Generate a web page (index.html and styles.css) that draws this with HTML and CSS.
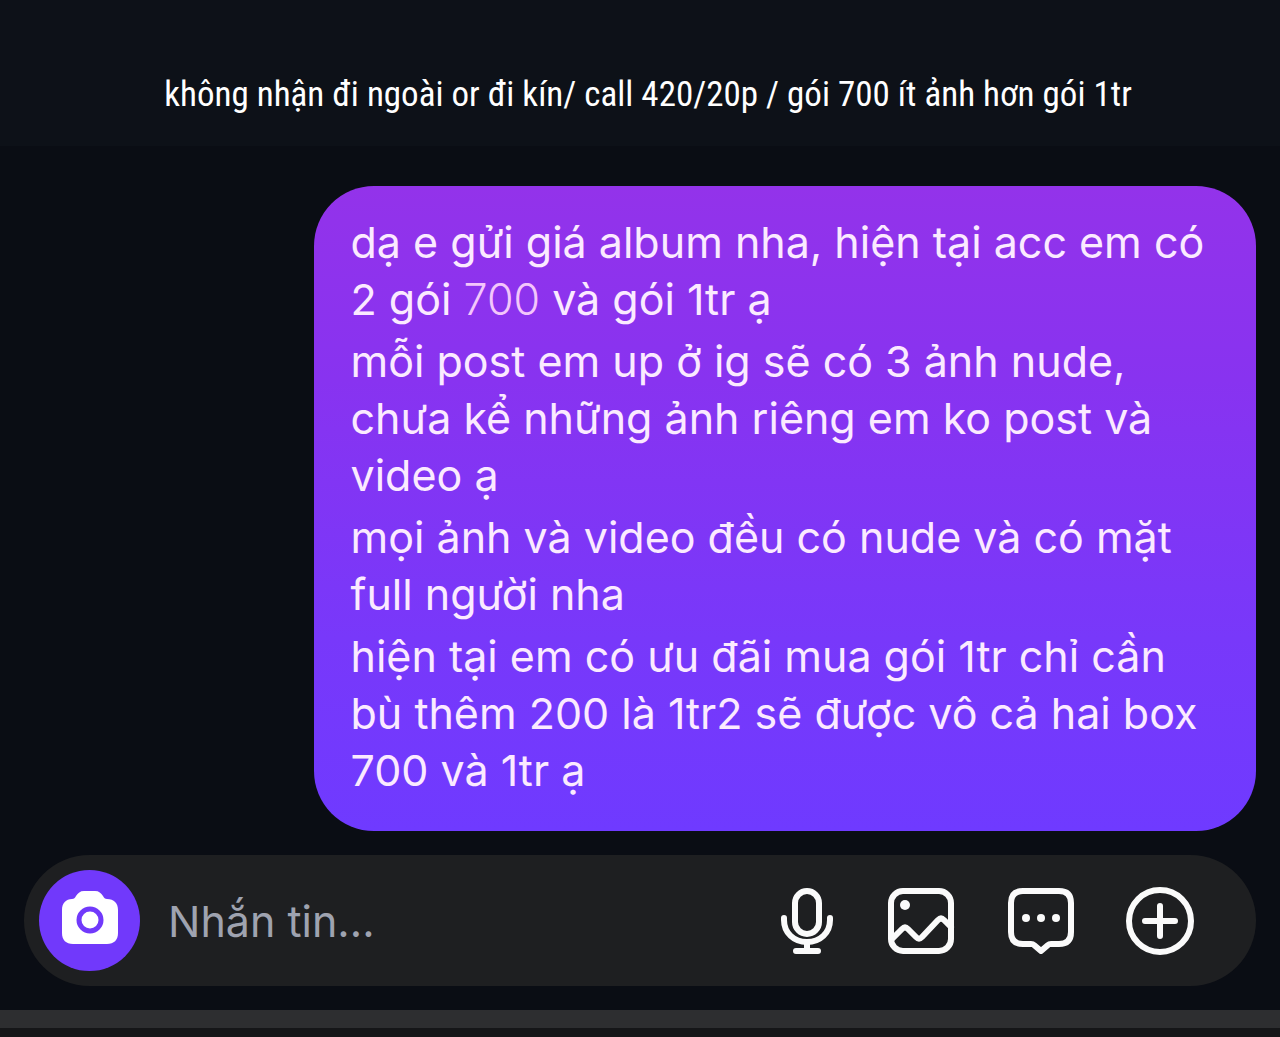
FILE: index.html
```html
<!DOCTYPE html>
<html lang="vi">
<head>
  <meta charset="UTF-8" />
  <meta name="viewport" content="width=device-width, initial-scale=1" />
  <title>Tin nhắn</title>
  <link rel="stylesheet" href="styles.css">
</head>
<body>

  <header class="caption">không nhận đi ngoài or đi kín/ call 420/20p / gói 700 ít ảnh hơn gói 1tr</header>

  <main class="chat">
    <div class="bubble">
      <p>dạ e gửi giá album nha, hiện tại acc em có 2 gói <a class="number" href="#">700</a> và gói 1tr ạ</p>
      <p>mỗi post em up ở ig sẽ có 3 ảnh nude, chưa kể những ảnh riêng em ko post và video ạ</p>
      <p>mọi ảnh và video đều có nude và có mặt full người nha</p>
      <p>hiện tại em có ưu đãi mua gói 1tr chỉ cần bù thêm 200 là 1tr2 sẽ được vô cả hai box 700 và 1tr ạ</p>
    </div>
  </main>

  <form class="composer">
    <button type="button" class="camera" aria-label="Máy ảnh">
      <svg viewBox="0 0 101 101">
        <path fill="#fff" d="M37 26c2-3 4-5 8-5h11c4 0 6 2 8 5 1 2 2 3 4 3 7 0 11 4 11 11v23c0 7-4 11-11 11H34c-7 0-11-4-11-11V40c0-7 4-11 10-11 2 0 3-1 4-3z"/>
        <circle cx="51" cy="50" r="11" fill="none" stroke="#7139fb" stroke-width="5"/>
      </svg>
    </button>
    <input type="text" id="mensaje" placeholder="Nhắn tin..." aria-label="Nhắn tin">
    <div class="actions">
      <button type="button" aria-label="Ghi âm">
        <svg viewBox="0 0 70 70">
          <rect x="27" y="5" width="24" height="43" rx="12"/>
          <path d="M16 32v2c0 13 10 22 23 22s23-9 23-22v-2M39 57v7M28 65h22"/>
        </svg>
      </button>
      <button type="button" aria-label="Ảnh">
        <svg viewBox="0 0 70 70">
          <rect x="4" y="5" width="60" height="60" rx="12"/>
          <circle class="dot" cx="18" cy="19" r="5"/>
          <path d="M5 53l10-10q3-3 6 0l8 8q3 3 6 0l16-17q3-3 6 0l7 7"/>
        </svg>
      </button>
      <button type="button" aria-label="Nhãn dán">
        <svg viewBox="0 0 70 70">
          <path d="M17 5h36q12 0 12 12v29q0 12-12 12h-8q-2 0-3 1l-7 6-7-6q-1-1-3-1h-8Q5 58 5 46V17Q5 5 17 5z"/>
          <circle class="dot" cx="20" cy="32" r="4"/>
          <circle class="dot" cx="35" cy="32" r="4"/>
          <circle class="dot" cx="50" cy="32" r="4"/>
        </svg>
      </button>
      <button type="button" aria-label="Thêm">
        <svg viewBox="0 0 70 70">
          <circle cx="35" cy="35" r="31"/>
          <path d="M35 20v30M20 35h30"/>
        </svg>
      </button>
    </div>
  </form>

  <footer class="bottom-bar"></footer>

</body>
</html>
```
FILE: styles.css
```css
* {
  box-sizing: border-box;
}

body {
  font-family: Inter, "Liberation Sans", sans-serif;
  margin: 0;
  min-height: 100vh;
  display: flex;
  flex-direction: column;
  background-color: #0a0d14;
  color: #fbeaff;
}

.caption {
  padding: 70px 20px 26px 36px;
  background-color: #0d1118;
  color: #fff;
  font-family: "Roboto Condensed", "Liberation Sans Narrow", Roboto, sans-serif;
  font-size: 35px;
  line-height: 50px;
  text-align: center;
}

.chat {
  flex: 1;
  display: flex;
  flex-direction: column;
  align-items: flex-end;
  padding: 40px 24px 24px;
}

.bubble {
  width: 76.5%;
  padding: 28px 36px 32px 37px;
  border-radius: 60px;
  background: linear-gradient(#9333ea, #8833f0 30%, #7838fa 70%, #6f3aff);
  font-size: 43px;
  line-height: 57px;
}

.bubble p {
  margin: 0 0 5px;
}

.bubble p:last-child {
  margin-bottom: 0;
}

.number {
  color: #f3c6fb;
  font-weight: 300;
  text-decoration: none;
}

.composer {
  display: flex;
  align-items: center;
  margin: 0 24px 24px;
  padding: 15px 61px 15px 15px;
  border-radius: 66px;
  background-color: #1e1f21;
}

button {
  flex: none;
  padding: 0;
  border: none;
  background: none;
  cursor: pointer;
}

svg {
  display: block;
  width: 100%;
}

.camera {
  width: 101px;
  height: 101px;
  border-radius: 50%;
  background-color: #7139fb;
}

.composer input {
  flex: 1;
  min-width: 0;
  margin: 0 28px;
  padding: 0;
  border: none;
  outline: none;
  background: none;
  color: #fff;
  font-family: inherit;
  font-size: 43px;
}

.composer input::placeholder {
  color: #9fa3b0;
}

.actions {
  display: flex;
  gap: 49px;
}

.actions button {
  width: 70px;
}

.actions svg {
  fill: none;
  stroke: #fafafa;
  stroke-width: 6;
  stroke-linecap: round;
  stroke-linejoin: round;
}

.actions .dot {
  fill: #fafafa;
  stroke: none;
}

.bottom-bar {
  height: 27px;
  border-top: 18px solid #2d2e30;
  background-color: #151618;
}
```
